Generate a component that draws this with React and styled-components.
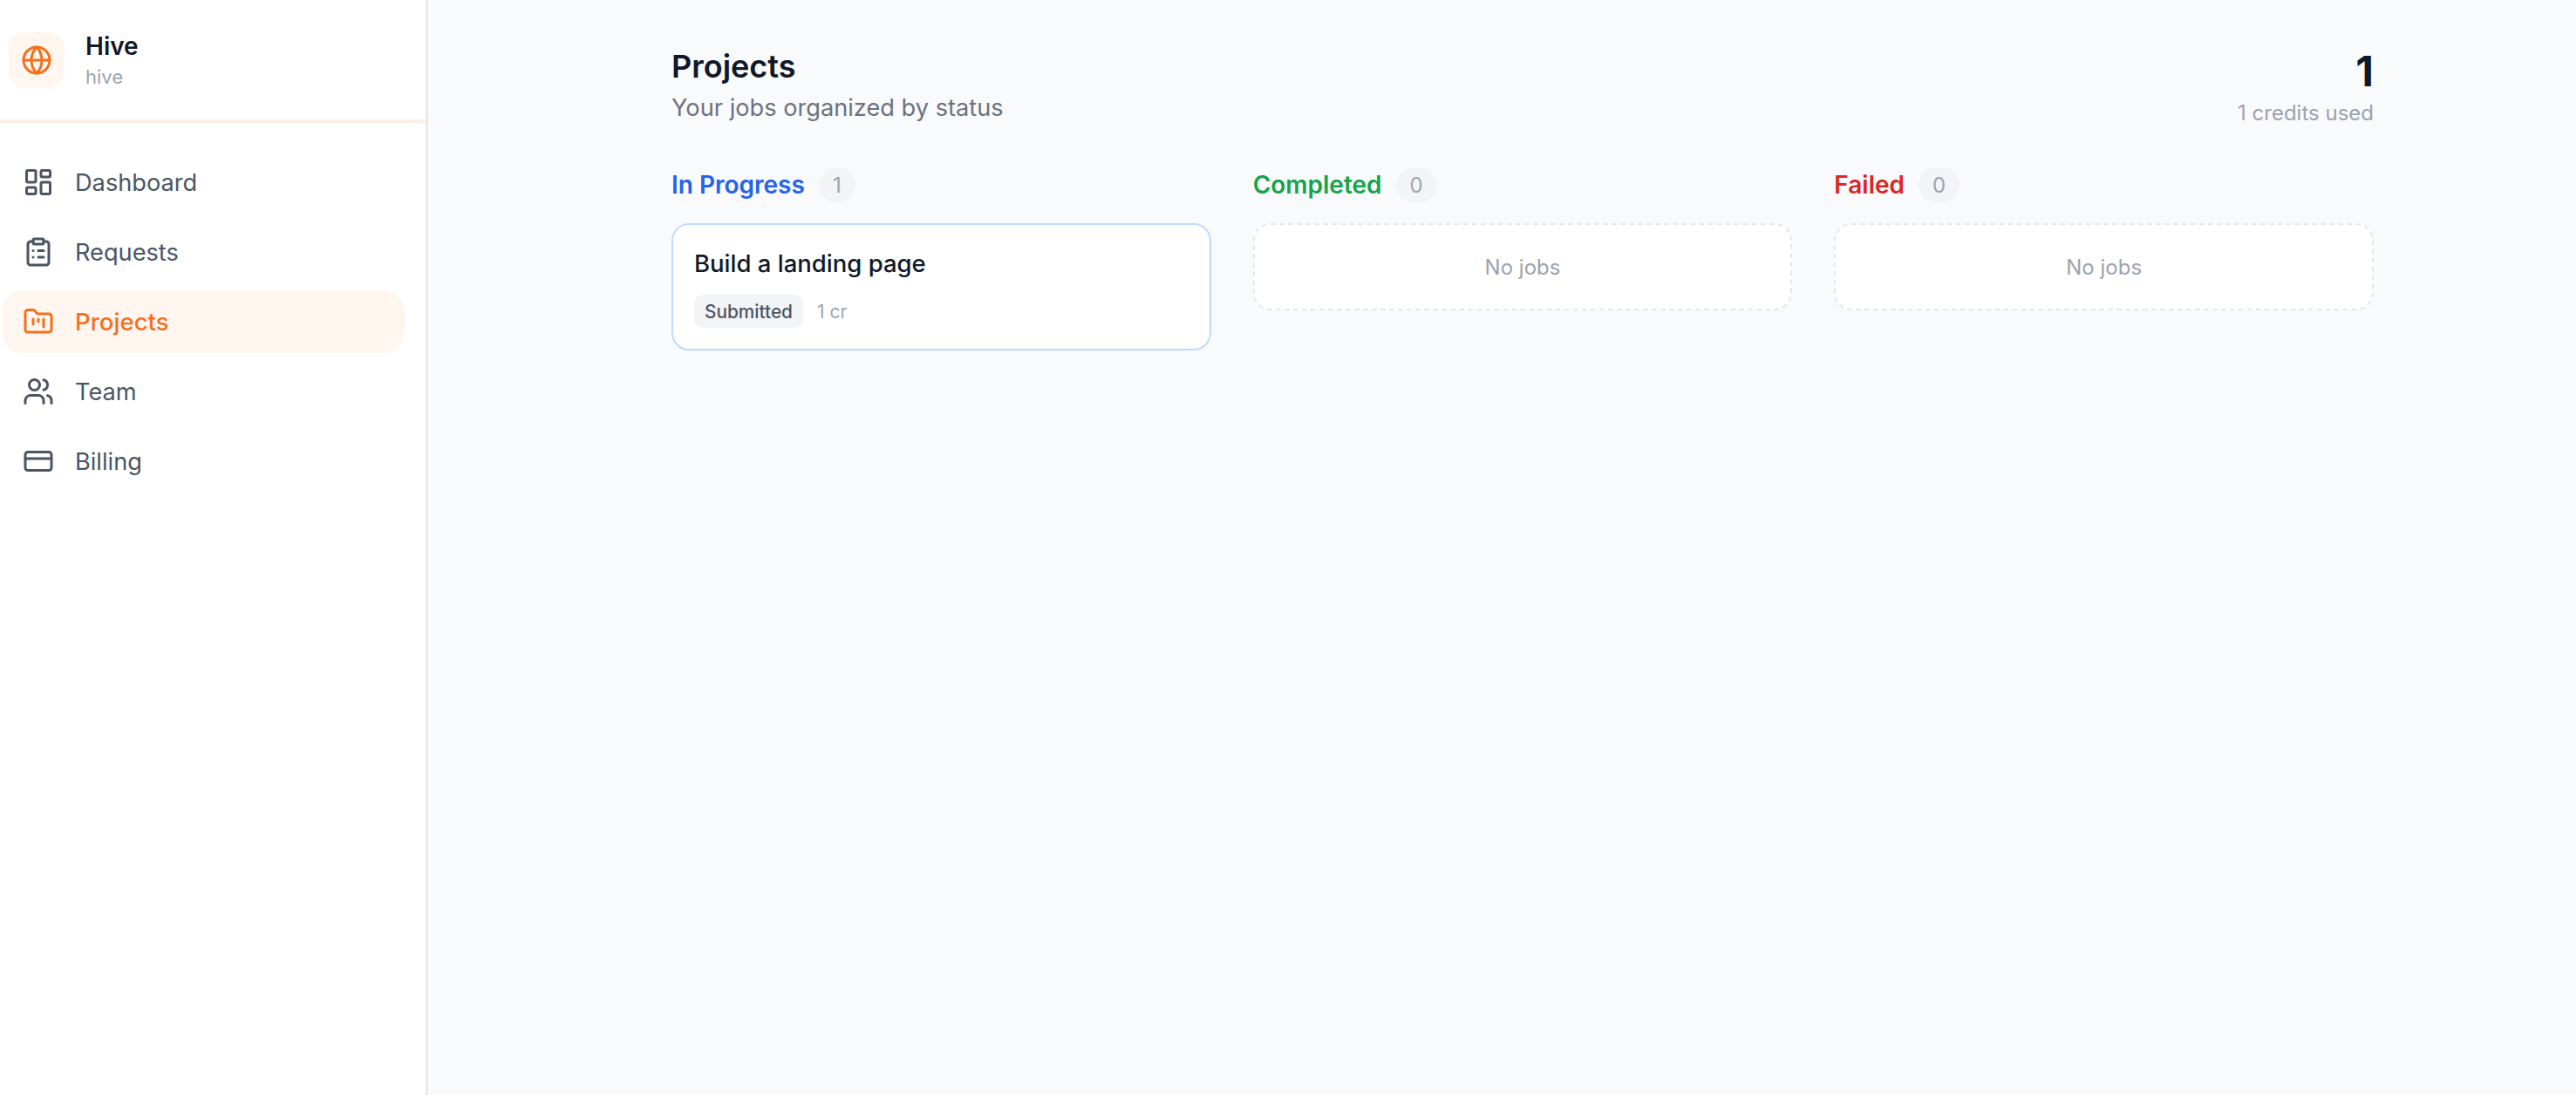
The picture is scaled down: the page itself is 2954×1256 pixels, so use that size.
import React from 'react';
import styled, { createGlobalStyle } from 'styled-components';
import { Globe, LayoutDashboard, ClipboardList, FolderKanban, Users, CreditCard } from 'lucide-react';

const GlobalStyle = createGlobalStyle`
  html, body {
    margin: 0;
    padding: 0;
    background: #f9fafc;
  }
  body {
    font-family: Inter, "Noto Sans", sans-serif;
    -webkit-font-smoothing: antialiased;
  }
`;

const Shell = styled.div`
  display: flex;
  height: 1256px;
  overflow: hidden;
`;

const Sidebar = styled.aside`
  width: 488px;
  flex-shrink: 0;
  box-sizing: content-box;
  background: #fff;
  border-right: 3px solid #e9eaee;
`;

const Brand = styled.div`
  display: flex;
  align-items: center;
  gap: 24px;
  height: 137px;
  padding-left: 10px;
  border-bottom: 4px solid #feeee6;
`;

const Logo = styled.div`
  width: 64px;
  height: 64px;
  border-radius: 18px;
  background: #fff6f0;
  color: #f3711d;
  display: flex;
  align-items: center;
  justify-content: center;
`;

const BrandName = styled.div`
  font-size: 28px;
  line-height: 38px;
  font-weight: 600;
  color: #111827;
`;

const BrandSlug = styled.div`
  font-size: 22px;
  line-height: 32px;
  color: #9ca3af;
`;

const Nav = styled.nav`
  display: flex;
  flex-direction: column;
  gap: 8px;
  padding: 32px 24px 0 2px;
`;

const NavItem = styled.div`
  display: flex;
  align-items: center;
  gap: 24px;
  height: 72px;
  padding-left: 24px;
  border-radius: 24px;
  font-size: ${(p) => (p.$active ? '27.6px' : '27.2px')};
  font-weight: ${(p) => (p.$active ? 500 : 400)};
  color: ${(p) => (p.$active ? '#f3711d' : '#4b5563')};
  background: ${(p) => (p.$active ? '#fff6f0' : 'transparent')};
`;

const Main = styled.main`
  flex: 1;
  padding: 48px 0 0 279px;
`;

const Content = styled.div`
  width: 1952px;
`;

const PageHeader = styled.header`
  display: flex;
  justify-content: space-between;
  align-items: flex-start;
  height: 144px;
`;

const Title = styled.h1`
  margin: 0;
  font-size: 36px;
  line-height: 56px;
  font-weight: 600;
  color: #111827;
`;

const Subtitle = styled.p`
  margin: 0;
  font-size: 27.2px;
  line-height: 40px;
  color: #6b7280;
`;

const Credits = styled.div`
  text-align: right;
  padding-top: 2px;
`;

const CreditCount = styled.div`
  font-size: 48px;
  line-height: 64px;
  font-weight: 700;
  color: #111827;
`;

const CreditLabel = styled.div`
  font-size: 24px;
  line-height: 32px;
  color: #9ca3af;
`;

const Board = styled.div`
  display: grid;
  grid-template-columns: repeat(3, 1fr);
  gap: 48px;
`;

const ColumnHead = styled.div`
  display: flex;
  align-items: center;
  gap: 16px;
  height: 40px;
  margin-bottom: 24px;
`;

const ColumnName = styled.h2`
  margin: 0;
  font-size: 28px;
  font-weight: 600;
  color: ${(p) => p.$color};
`;

const CountBadge = styled.span`
  height: 40px;
  padding: 0 16px;
  border-radius: 20px;
  background: #f3f4f6;
  color: #9ca3af;
  font-size: 24px;
  display: flex;
  align-items: center;
  justify-content: center;
`;

const JobCard = styled.div`
  box-sizing: border-box;
  height: 146px;
  padding: 26px 24px 0;
  background: #fff;
  border: 2px solid #bfdbfe;
  border-radius: 20px;
`;

const JobTitle = styled.div`
  font-size: 27.5px;
  line-height: 36px;
  font-weight: 500;
  color: #111827;
`;

const JobMeta = styled.div`
  display: flex;
  align-items: center;
  gap: 16px;
  margin-top: 18px;
`;

const StatusTag = styled.span`
  height: 38px;
  padding: 0 12px;
  display: flex;
  align-items: center;
  border-radius: 10px;
  background: #f3f4f6;
  color: #4b5563;
  font-size: 20.8px;
  font-weight: 500;
`;

const Cost = styled.span`
  font-size: 21px;
  color: #9ca3af;
`;

const EmptySlot = styled.div`
  box-sizing: border-box;
  height: 100px;
  display: flex;
  align-items: center;
  justify-content: center;
  background: #fff;
  border: 2px dashed #e5e7eb;
  border-radius: 20px;
  font-size: 24px;
  color: #9ca3af;
`;

const navItems = [
  { label: 'Dashboard', icon: LayoutDashboard },
  { label: 'Requests', icon: ClipboardList },
  { label: 'Projects', icon: FolderKanban, active: true },
  { label: 'Team', icon: Users },
  { label: 'Billing', icon: CreditCard },
];

const columns = [
  { name: 'In Progress', color: '#2563eb', jobs: [{ title: 'Build a landing page', status: 'Submitted', cost: '1 cr' }] },
  { name: 'Completed', color: '#16a34a', jobs: [] },
  { name: 'Failed', color: '#dc2626', jobs: [] },
];

export default function App() {
  return (
    <>
      <GlobalStyle />
      <Shell>
        <Sidebar>
          <Brand>
            <Logo>
              <Globe size={36} />
            </Logo>
            <div>
              <BrandName>Hive</BrandName>
              <BrandSlug>hive</BrandSlug>
            </div>
          </Brand>
          <Nav>
            {navItems.map(({ label, icon: Icon, active }) => (
              <NavItem key={label} $active={active}>
                <Icon size={36} />
                {label}
              </NavItem>
            ))}
          </Nav>
        </Sidebar>
        <Main>
          <Content>
            <PageHeader>
              <div>
                <Title>Projects</Title>
                <Subtitle>Your jobs organized by status</Subtitle>
              </div>
              <Credits>
                <CreditCount>1</CreditCount>
                <CreditLabel>1 credits used</CreditLabel>
              </Credits>
            </PageHeader>
            <Board>
              {columns.map((col) => (
                <section key={col.name}>
                  <ColumnHead>
                    <ColumnName $color={col.color}>{col.name}</ColumnName>
                    <CountBadge>{col.jobs.length}</CountBadge>
                  </ColumnHead>
                  {col.jobs.length === 0 && <EmptySlot>No jobs</EmptySlot>}
                  {col.jobs.map((job) => (
                    <JobCard key={job.title}>
                      <JobTitle>{job.title}</JobTitle>
                      <JobMeta>
                        <StatusTag>{job.status}</StatusTag>
                        <Cost>{job.cost}</Cost>
                      </JobMeta>
                    </JobCard>
                  ))}
                </section>
              ))}
            </Board>
          </Content>
        </Main>
      </Shell>
    </>
  );
}
